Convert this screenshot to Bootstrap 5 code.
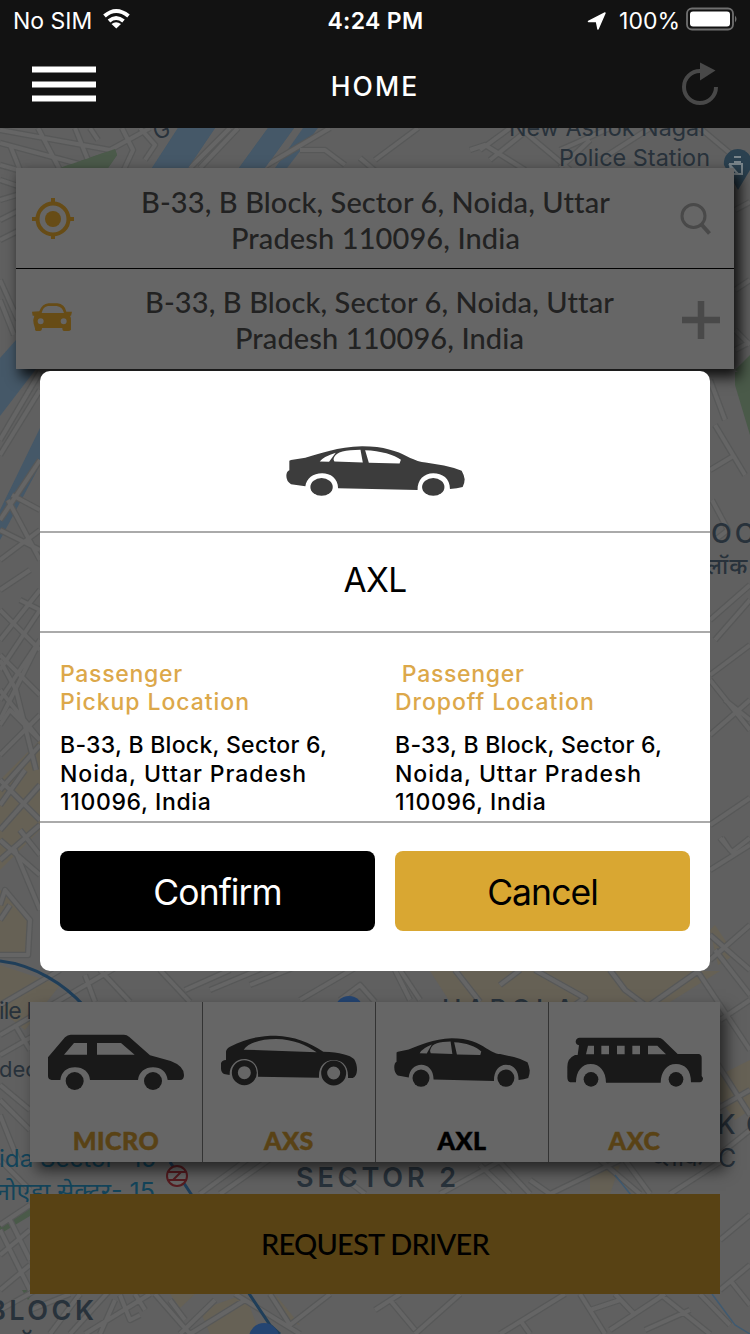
<!DOCTYPE html>
<html lang="en">
<head>
<meta charset="utf-8">
<meta name="viewport" content="width=device-width, initial-scale=1">
<title>Home</title>
<link href="https://cdn.jsdelivr.net/npm/bootstrap@5.3.0/dist/css/bootstrap.min.css" rel="stylesheet">
<style>
body{margin:0;background:#606060;font-family:Inter,"Liberation Sans",sans-serif}
.phone{width:750px;height:1334px}
.map-art{inset:0;z-index:0}
.topbar{background:#121212;height:128px;color:#fff;z-index:1}
.status-row{height:41px;padding:1px 12px 0 13px;font-size:23px;line-height:40px}
.status-row>div{flex:1 1 0}
.title-row{height:87px;padding:0 32px 2px}
.title-row h1{font-size:26.5px;font-weight:500;letter-spacing:2.1px;line-height:1}
.page-body{z-index:1;padding:40px 16px 40px}
.trip-box{background:#666;height:201px;box-shadow:5px 7px 13px 1px rgba(0,0,0,.85)}
.trip-line{height:100px;padding-left:16px;font-family:Lato,sans-serif;font-size:29px;line-height:36px;color:#222}
.trip-line+.trip-line{border-top:1px solid #000;height:101px}
.trip-text{letter-spacing:.1px;font-weight:500;white-space:nowrap;padding-top:3px;padding-right:3px}
.cars{background:#666;height:160px;margin:0 14px 32px;box-shadow:6px 8px 14px rgba(0,0,0,.62)}
.car-cell{width:173px;border-right:1px solid #333;padding:32px 0 0}
.car-cell:last-child{width:171px;border-right:0}
.car-pic{height:56px;margin-left:18px}
.car-name{font-family:Lato,sans-serif;font-weight:900;font-size:25px;line-height:30px;margin-top:35px;color:#594215;letter-spacing:.5px;-webkit-text-stroke:.5px}
.request{height:100px;margin:0 14px;background:#584214;color:#000;font-family:Lato,sans-serif;font-size:29px;font-weight:500;letter-spacing:-.75px;border-radius:0;border:0}
.request:hover{background:#584214;color:#000}
.dialog-box{left:40px;top:371px;width:670px;height:600px;border-radius:10px;background:#fff;z-index:2;color:#000}
.dlg-car{height:162px;border-bottom:2px solid #aaa;padding-top:75px}
.dlg-name{height:100px;border-bottom:2px solid #aaa;font-size:33.5px;letter-spacing:-.7px;padding-bottom:3px}
.dlg-places{height:190px;border-bottom:2px solid #aaa;padding:27px 20px 0;font-size:23px;line-height:28.5px;font-weight:500}
.dlg-places>div{flex:0 0 335px;white-space:nowrap}
.gold{color:#dca84a;line-height:28px;margin-bottom:15px;letter-spacing:.95px}
.gold span{letter-spacing:.7px}
.addr-a{letter-spacing:.28px}.addr-b{letter-spacing:.95px}.addr-c{letter-spacing:.65px}
.dlg-btns{padding:28px 20px}
.dlg-btn{height:80px;border-radius:8px;border:0;font-size:35.5px;letter-spacing:-.95px;padding:3px 0 0}
.b-confirm,.b-confirm:hover{background:#000;color:#fff;width:315px}
.b-cancel,.b-cancel:hover{background:#d9a732;color:#000;width:295px}
</style>
</head>
<body>
<svg width="0" height="0" class="position-absolute">
<symbol id="sedan" viewBox="47 49 536 149" preserveAspectRatio="none">
<path fill-rule="evenodd" d="M57 93 62 91 105 84C150 72 200 52 275 50C340 50 380 65 410 80C435 92 450 97 465 98L520 107Q550 113 573 123Q580 135 582 148Q582 160 576 171Q560 176 538 177C538 145 515 130 488 130C460 130 440 150 441 180L203 175C203 145 180 130 155 130C128 130 108 145 105 169L62 163Q48 155 48 138Q48 125 57 121ZM148 95Q160 80 196 69L176 96ZM190 85C198 64 225 61 270 60L277 98 192 95Q188 90 190 85ZM284 62C330 63 372 76 391 90L387 101 295 99Z"/>
<ellipse cx="153.500" cy="171" rx="33.500" ry="26.500"/><ellipse cx="488" cy="171" rx="33.500" ry="26.500"/></symbol>
</svg>
<div class="phone position-relative overflow-hidden d-flex flex-column">
<svg class="map-art position-absolute" width="750" height="1334" viewBox="0 0 750 1334">
<defs>
<g id="roads" fill="none">
<path d="M0 130 110 150 150 128M0 143 120 175M0 165 60 182M0 180 30 190M38 128 60 170M75 128 90 165M10 145 20 170M90 128 98 140M122 128 133 150 110 200M0 200 50 185M0 220 40 200M0 240 20 230M140 128 155 145 145 160"/>
<path d="M190 168 230 128M200 168 238 128M262 168 330 128M300 150 325 150 345 165M360 158 380 175M375 160 418 128M470 150 485 145 525 170M480 150 510 128M490 160 530 128M520 128 570 170M560 168 590 140M700 128 750 170M650 128 600 160M610 128 560 150"/>
<path d="M735 210 750 202M735 290 750 280M735 330 750 345M735 350 750 342M0 280 18 320M0 300 14 335M0 440 40 372M0 455 40 390M0 520 40 460M12 495 40 510M8 500 40 560M0 530 40 550M0 560 40 530M0 590 30 570M0 610 40 650M0 640 40 590M0 670 40 610M20 600 40 610M0 700 40 640M40 640 0 720M0 655 40 695"/>
<path d="M0 660 16 690 36 770M0 690 40 740M0 725 10 710 40 740M0 755 40 715M0 780 40 820M0 790 40 745M0 805 25 770M0 830 40 785M0 840 40 875M0 860 40 825M14 848 40 910M0 905 5 890 30 920 28 955H0M20 830 40 855M0 920 10 905"/>
<path d="M710 470 735 455M712 500 728 530 715 540M715 425 745 475M710 380 725 420M710 620 750 585M715 640 750 600M710 675 750 645M710 680 750 730M710 735 750 700M725 700 750 720M710 825 750 798M720 838 732 852 750 838M710 870 750 845M730 850 722 838M710 960 750 925M710 935 750 970M715 950 750 995"/>
<path d="M0 1035 120 965M0 1005 60 970M0 1055 35 1035M15 1025 30 1050M100 970 130 1002M85 975 95 1002M160 970 190 1002M185 990 230 970M210 990 270 965M250 985 300 965M300 1000 360 965M340 1000 360 985 375 1002M395 970 410 1000M400 970 420 1000M455 970 480 1002M500 985 520 970M535 970 585 998 575 1005M610 970 625 990 645 1005M650 1005 700 970M690 960 750 1050M720 1020 750 1000M715 1060 750 1115M715 1110 750 1090M0 1100 30 1130M0 1115 20 1165M0 1085 30 1110"/>
<path d="M0 1225 30 1205M0 1160 30 1190M0 1255 30 1230M0 1230 30 1290M10 1220 30 1260M0 1290 30 1265M0 1310 90 1260M200 1194 260 1150M220 1194 290 1145M340 1175 365 1194M440 1194 520 1150M500 1162 530 1194M530 1180 550 1194M480 1165 510 1194M550 1194 620 1160M600 1160 640 1194M625 1160 650 1194M670 1194 720 1162M710 1162 750 1130M720 1240 750 1215M720 1290 750 1265M730 1280 750 1305"/>
<path d="M30 1310 70 1294M50 1334 80 1294M70 1334 110 1290M85 1334 150 1294M100 1334 115 1300M120 1295 130 1320 140 1315M135 1294 145 1310M155 1294 190 1334M180 1334 215 1300M170 1300 185 1320M190 1334 245 1300M235 1294 300 1334M270 1294 290 1325M290 1325 330 1294M375 1310 400 1294M390 1300 415 1330M415 1334 460 1294M500 1334 565 1294M520 1320 530 1334M580 1294 605 1334M590 1310 620 1300M610 1330 665 1294M615 1294 635 1315M660 1294 710 1334M700 1294 730 1325M645 1330 690 1310"/>
</g>
</defs>
<rect width="750" height="1334" fill="#606060"/>
<path fill="#666155" d="M0 780 40 740V830L0 870ZM0 890 30 920V955H0ZM0 965 60 985 25 1030 0 1010ZM430 971H720L670 1002H450ZM715 925 735 955 718 965 710 930ZM720 1075 750 1060V1110L735 1120 720 1100ZM590 1175 620 1165 610 1194H590ZM200 1310 245 1294 260 1334H210ZM170 1294H195L180 1308ZM275 1294 300 1325 285 1320Z"/>
<path fill="#4a5a49" d="M60 168 115 149 117 155 108 168ZM735 372H750V435L735 385ZM735 370 750 355V380ZM0 1225 30 1205V1216L0 1234ZM22 1290H35L28 1300Z"/>
<path fill="#455868" d="M178 128H215L188 168H152ZM268 128H294L265 168H239ZM303 128H318L287 168H275ZM0 358 16 340V369H36L0 416ZM0 540 0 510 40 428V465Z"/>
<use href="#roads" stroke="#575858" stroke-width="6.500" stroke-linejoin="round"/>
<use href="#roads" stroke="#656565" stroke-width="4" stroke-linejoin="round"/>
<path fill="#455868" d="M178 128H215L188 168H152ZM268 128H294L265 168H239Z"/>
<path fill="#4b5a4a" d="M60 168 115 149 117 155 108 168Z"/>
<path fill="none" stroke="#1f3e59" stroke-width="3" d="M0 961C35 965 65 985 84 1006M170 1162 195 1200M248 1292 270 1325 280 1334"/>
<path fill="none" stroke="#405a70" stroke-width="1.500" d="M615 1175 635 1200M712 1294 735 1325 750 1334"/>
<circle cx="349" cy="1010" r="14" fill="#244572"/><circle cx="264" cy="1338" r="15" fill="#244572"/>
<path fill="#2b4150" d="M724 165A14 14 0 1 1 750 170L738 190Z"/><path fill="none" stroke="#7b868c" stroke-width="2" d="M734 157H741M734 162H741M730 164H742V174H731ZM729 164 738 174"/>
<g fill="#28323b" font-family="Inter,sans-serif">
<text x="155" y="139" font-size="22" transform="rotate(-25 160 135)">G</text>
<text x="509" y="136" font-size="23" textLength="199" lengthAdjust="spacingAndGlyphs">New Ashok Nagar</text>
<text x="559" y="166" font-size="23" textLength="151" lengthAdjust="spacingAndGlyphs">Police Station</text>
<text x="711" y="543" font-size="27" font-weight="500" letter-spacing="3">OC</text>
<text x="706" y="574" font-size="23" font-weight="500" letter-spacing="1" font-family="'Noto Sans',sans-serif">लॉक</text>
<text x="-1" y="1019" font-size="23" textLength="158">ile Market Depo</text>
<text x="-1" y="1077" font-size="22">dec</text>
<text x="442" y="1018" font-size="26" textLength="132" font-weight="500">HAROLA</text>
<text x="296" y="1187" font-size="27" font-weight="600" textLength="160">SECTOR 2</text>
<text x="-12" y="1320" font-size="27" font-weight="600" textLength="106">BLOCK</text>
<text x="717" y="1134" font-size="27" font-weight="500">K</text><text x="746" y="1134" font-size="27" font-weight="500">C</text>
<text x="652" y="1166" font-size="25" font-family="'Noto Sans',sans-serif">ब्लॉक</text><text x="718" y="1167" font-size="25">C</text>
<text x="-1" y="1352" font-size="25" font-family="'Noto Sans',sans-serif">ब्लॉक</text>
</g>
<g fill="#13445a" font-family="Inter,'Noto Sans',sans-serif" font-size="24">
<text x="-1" y="1167" textLength="157" lengthAdjust="spacingAndGlyphs">ida Sector- 15</text>
<text x="-4" y="1200" textLength="159" lengthAdjust="spacingAndGlyphs">नोएडा सेक्टर- 15</text>
</g>
<g fill="#666" stroke="#561c20" stroke-width="2"><circle cx="177" cy="1176" r="10"/><path d="M167 1172H187M167 1180H187M181 1172 173 1180"/></g>
</svg>

<header class="topbar position-relative flex-shrink-0">
<div class="status-row d-flex">
<div class="d-flex align-items-center"><span>No SIM</span>
<svg width="30" height="22" viewBox="0 0 30 22" class="ms-2 mb-1" style="padding-left:0" fill="none" stroke="#fff" stroke-width="4"><g transform="translate(3 0)"><path d="M1.500 8Q13-2 25.500 8M6 13Q13 7 20.500 13"/><path d="M13.300 20.500 8.500 16Q13 12.500 18 16Z" fill="#fff" stroke="none"/></g></svg></div>
<div class="text-center fw-semibold" style="letter-spacing:.35px">4:24 PM</div>
<div class="d-flex align-items-center justify-content-end"><svg width="20" height="20" viewBox="0 0 20 20" class="me-2"><path fill="#fff" stroke="#fff" stroke-width="1.500" stroke-linejoin="round" d="M1.500 10.500 18 2 11 18 9.500 10.500Z"/></svg><span class="ms-1">100%</span>
<svg width="54" height="24" viewBox="0 0 54 24" class="ms-1 mb-1"><rect x="3" y="1.500" width="46" height="21" rx="5" fill="none" stroke="#707070" stroke-width="1.800"/><rect x="6" y="4.500" width="40" height="15" rx="3" fill="#fff"/><path fill="#707070" d="M51 8.500Q54 12 51 15.500Z"/></svg></div>
</div>
<div class="title-row d-flex align-items-center justify-content-between">
<svg width="64" height="36" viewBox="0 0 64 36" fill="#fff"><path d="M0 .5H64V6.500H0ZM0 15.500H64V21.500H0ZM0 29.500H64V35.500H0Z"/></svg>
<h1 class="mb-0" style="padding-top:5px">HOME</h1>
<svg width="64" height="46" viewBox="-12 0 64 46" class="overflow-visible"><path d="M48.500 24.500A16 16 0 1 1 32.500 8.500" transform="translate(1.500 1.500)" fill="none" stroke="#484848" stroke-width="4"/><path fill="#484848" d="M34 1.500 49.500 9.500 34 19.500Z"/></svg>
</div>
</header>

<main class="page-body position-relative flex-grow-1 d-flex flex-column">
<section class="trip-box">
<div class="trip-line d-flex align-items-center">
<svg width="42" height="42" viewBox="0 0 42 42" fill="none" stroke="#674c16" stroke-width="4" class="flex-shrink-0"><circle cx="21" cy="22" r="15.500"/><path d="M21 1V8M21 36V42M0 22H7M35 22H42"/><circle cx="21" cy="22" r="8" fill="#674c16" stroke="none"/></svg>
<div class="trip-text flex-grow-1 text-center">B-33, B Block, Sector 6, Noida, Uttar<br>Pradesh 110096, India</div>
<svg width="54" height="40" viewBox="0 0 54 40" fill="none" stroke="#494949" stroke-width="3" class="flex-shrink-0"><circle cx="13.500" cy="18" r="11.500"/><path stroke-width="4" d="M21.500 26.500 29.500 35.500"/></svg>
</div>
<div class="trip-line d-flex align-items-center">
<svg width="40" height="28" viewBox="0 0 120 84" class="flex-shrink-0 mb-1"><path fill="#674c16" fill-rule="evenodd" d="M22 25Q30 3 50 1H76Q98 3 103 26H120L117 38H114Q118 44 117 54V80Q114 84 108 84H96Q91 84 91 75H30Q30 84 23 84H12Q8 82 9 76L5 62Q2 50 7 38H2L0 26ZM29 30H96Q91 11 74 9H48Q33 11 29 30ZM26 46A9 9 0 1 0 26 64A9 9 0 1 0 26 46ZM95 46A9 9 0 1 0 95 64A9 9 0 1 0 95 46Z"/></svg>
<div class="trip-text flex-grow-1 text-center" style="padding-left:10px;padding-top:2px">B-33, B Block, Sector 6, Noida, Uttar<br>Pradesh 110096, India</div>
<svg width="54" height="40" viewBox="0 0 54 40" class="flex-shrink-0"><path d="M21 2V40M2 21H40" stroke="#494949" stroke-width="6.500"/></svg>
</div>
</section>

<div class="mt-auto">
<section class="cars d-flex">
<div class="car-cell"><div class="car-pic"><svg width="136" height="56" viewBox="144 222 408 168" preserveAspectRatio="none" fill="#191919"><path fill-rule="evenodd" d="M144 292 195 232Q203 224 212 224H372Q380 224 388 231L450 286 512 303Q552 318 552 345Q552 360 540 360H503C500 335 483 322 459 322C435 322 417 336 414 360H270C268 336 250 322 225 322C200 322 184 336 181 360H155Q144 358 144 348ZM192 284 222 249H261V284ZM291 249H363L404 284H291Z"/><circle cx="224" cy="363" r="27"/><circle cx="459" cy="363" r="27"/></svg></div><div class="car-name text-center">MICRO</div></div>
<div class="car-cell"><div class="car-pic"><svg width="136" height="56" viewBox="663 222 408 168" fill="#191919"><path fill-rule="evenodd" d="M678 300V275Q679 266 690 260C740 235 780 227 828 227C880 228 930 248 970 275C1020 277 1050 285 1062 297Q1071 310 1071 330Q1070 350 1058 354H1044C1046 315 1025 300 1001 300C975 300 955 318 957 353L774 350C777 315 757 297 733 297C705 297 688 320 689 345L672 342Q663 338 663 325V310Q665 301 678 300ZM731 269C745 248 785 237 828 237C880 238 920 255 950 277Z"/><g fill="none" stroke="#191919" stroke-width="18"><circle cx="733" cy="338" r="28.500"/><circle cx="1001" cy="339" r="28.500"/></g></svg></div><div class="car-name text-center">AXS</div></div>
<div class="car-cell"><div class="car-pic d-flex align-items-center"><svg width="136" height="49" fill="#191919"><use href="#sedan"/></svg></div><div class="car-name text-center" style="color:#000">AXL</div></div>
<div class="car-cell"><div class="car-pic"><svg width="136" height="56" viewBox="576 222 408 168" fill="#191919"><path fill-rule="evenodd" d="M612 256Q602 254 602 244Q604 233 614 233H850Q858 233 864 239L908 282H970Q980 283 980 294V348L984 354Q984 366 974 367H948C948 330 930 312 903 312C875 312 858 335 857 368H693C693 335 675 312 647 312C620 312 603 335 603 367H586Q577 366 577 352V320Q577 295 600 285H608ZM639 257H657V283H633ZM679 257H702V283H679ZM726 257H749V283H726ZM772 257H795V283H772ZM819 257H847L873 283H819Z"/><circle cx="648" cy="358" r="22"/><circle cx="903" cy="358" r="22"/></svg></div><div class="car-name text-center">AXC</div></div>
</section>
<div class="d-grid"><button class="btn request">REQUEST DRIVER</button></div>
</div>
</main>

<section class="dialog-box position-absolute" role="dialog" aria-label="Confirm ride">
<div class="dlg-car"><svg width="179" height="50" fill="#3c3c3c" class="d-block mx-auto"><use href="#sedan"/></svg></div>
<div class="dlg-name d-flex align-items-center justify-content-center">AXL</div>
<div class="dlg-places d-flex">
<div><div class="gold"><span>Passenger</span><br>Pickup Location</div><span class="addr-a">B-33, B Block, Sector 6,</span><br><span class="addr-b">Noida, Uttar Pradesh</span><br><span class="addr-c">110096, India</span></div>
<div><div class="gold"><span>&nbsp;Passenger</span><br>Dropoff Location</div><span class="addr-a">B-33, B Block, Sector 6,</span><br><span class="addr-b">Noida, Uttar Pradesh</span><br><span class="addr-c">110096, India</span></div>
</div>
<div class="dlg-btns d-flex justify-content-between"><button class="btn dlg-btn b-confirm">Confirm</button><button class="btn dlg-btn b-cancel">Cancel</button></div>
</section>
</div>
<script src="https://cdn.jsdelivr.net/npm/bootstrap@5.3.0/dist/js/bootstrap.bundle.min.js"></script>
</body>
</html>
